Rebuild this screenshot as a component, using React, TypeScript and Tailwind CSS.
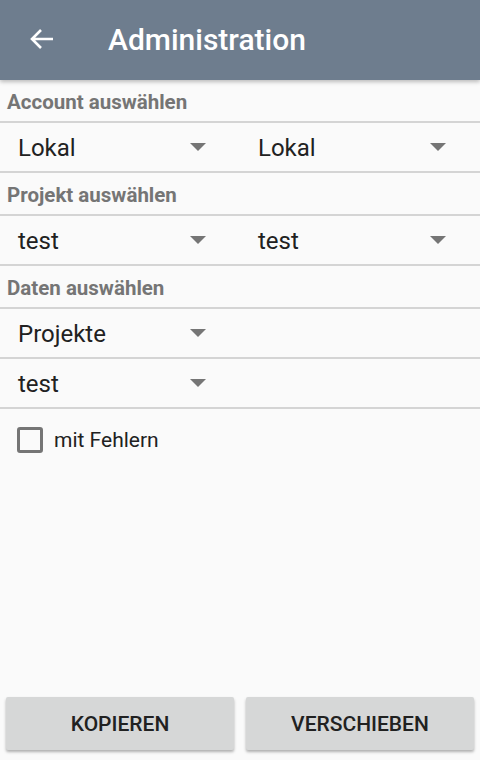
import React from "react";

function Caret() {
  return (
    <svg width="16" height="8" viewBox="0 0 16 8" className="shrink-0">
      <path d="M0 0h16L8 8z" fill="#757575" />
    </svg>
  );
}

function Divider() {
  return <div className="h-[2px] bg-[#d4d4d4]" />;
}

function SectionLabel({ children }: { children: React.ReactNode }) {
  return (
    <div className="h-[41px] flex items-center pl-[7px] pt-[3px] text-[20.5px] font-bold text-[#757575]">
      {children}
    </div>
  );
}

function Spinner({ value }: { value: string }) {
  return (
    <div className="w-[240px] h-[48px] flex items-center justify-between pl-[18px] pr-[34px]">
      <span className="text-[24px] text-[#212121] mt-[2px]">{value}</span>
      <Caret />
    </div>
  );
}

export default function App() {
  return (
    <div
      className="w-[480px] h-[760px] flex flex-col bg-[#fafafa] overflow-hidden"
      style={{ fontFamily: "Roboto, 'Liberation Sans', sans-serif" }}
    >
      {/* Toolbar */}
      <div className="h-[80px] shrink-0 bg-[#6e7d8e] flex items-center shadow-[0_2px_4px_rgba(0,0,0,0.25)] relative z-10">
        <div className="w-[108px] flex items-center pl-[29px] -mt-[2px]">
          <svg width="25" height="22" viewBox="0 0 25 22" fill="none" stroke="white" strokeWidth="2.6">
            <path d="M24 11H3M12 2L3 11l9 9" />
          </svg>
        </div>
        <h1 className="text-[30px] font-medium text-white -mt-[2px]">Administration</h1>
      </div>

      <div className="flex-1">
        <SectionLabel>Account auswählen</SectionLabel>
        <Divider />
        <div className="flex">
          <Spinner value="Lokal" />
          <Spinner value="Lokal" />
        </div>
        <Divider />

        <SectionLabel>Projekt auswählen</SectionLabel>
        <Divider />
        <div className="flex">
          <Spinner value="test" />
          <Spinner value="test" />
        </div>
        <Divider />

        <SectionLabel>Daten auswählen</SectionLabel>
        <Divider />
        <Spinner value="Projekte" />
        <Divider />
        <Spinner value="test" />
        <Divider />

        <label className="flex items-center h-[62px] pl-[17px]">
          <span className="w-[26px] h-[26px] border-[3px] border-[#757575] rounded-[3px] shrink-0" />
          <span className="ml-[11px] mt-[2px] text-[21px] text-[#212121]">mit Fehlern</span>
        </label>
      </div>

      {/* Buttons */}
      <div className="flex gap-[12px] px-[6px] pb-[10px]">
        <button className="flex-1 h-[53px] pt-[3px] bg-[#d6d7d7] rounded-[2px] shadow-[0_2px_3px_rgba(0,0,0,0.3)] text-[21px] font-medium text-[#212121]">
          KOPIEREN
        </button>
        <button className="flex-1 h-[53px] pt-[3px] bg-[#d6d7d7] rounded-[2px] shadow-[0_2px_3px_rgba(0,0,0,0.3)] text-[21px] font-medium text-[#212121]">
          VERSCHIEBEN
        </button>
      </div>
    </div>
  );
}
